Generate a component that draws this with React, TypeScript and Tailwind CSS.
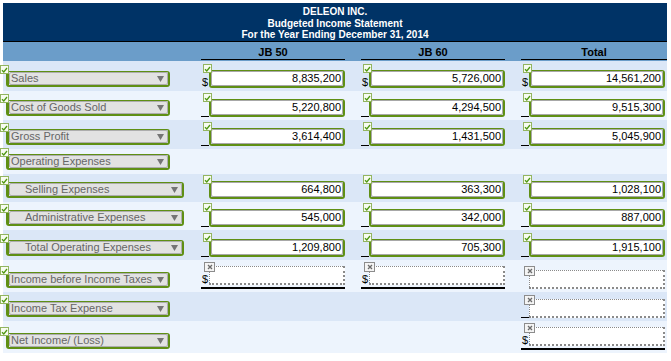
import React from 'react';

type Cell = {
  v?: string;
  empty?: boolean;
  dollar?: boolean;
  line?: 'single' | 'double';
} | null;

type Row = {
  label: string;
  indent?: boolean;
  h: string;
  dark: boolean;
  cells: [Cell, Cell, Cell];
};

const rows: Row[] = [
  {
    label: 'Sales',
    h: 'h-[30px]',
    dark: true,
    cells: [
      { v: '8,835,200', dollar: true },
      { v: '5,726,000', dollar: true },
      { v: '14,561,200', dollar: true },
    ],
  },
  {
    label: 'Cost of Goods Sold',
    h: 'h-[29px]',
    dark: false,
    cells: [
      { v: '5,220,800', line: 'single' },
      { v: '4,294,500', line: 'single' },
      { v: '9,515,300', line: 'single' },
    ],
  },
  {
    label: 'Gross Profit',
    h: 'h-[29px]',
    dark: true,
    cells: [
      { v: '3,614,400', line: 'single' },
      { v: '1,431,500', line: 'single' },
      { v: '5,045,900', line: 'single' },
    ],
  },
  { label: 'Operating Expenses', h: 'h-[25px]', dark: false, cells: [null, null, null] },
  {
    label: 'Selling Expenses',
    indent: true,
    h: 'h-[28px]',
    dark: true,
    cells: [{ v: '664,800' }, { v: '363,300' }, { v: '1,028,100' }],
  },
  {
    label: 'Administrative Expenses',
    indent: true,
    h: 'h-[28px]',
    dark: false,
    cells: [
      { v: '545,000', line: 'single' },
      { v: '342,000', line: 'single' },
      { v: '887,000', line: 'single' },
    ],
  },
  {
    label: 'Total Operating Expenses',
    indent: true,
    h: 'h-[30px]',
    dark: true,
    cells: [
      { v: '1,209,800', line: 'single' },
      { v: '705,300', line: 'single' },
      { v: '1,915,100', line: 'single' },
    ],
  },
  {
    label: 'Income before Income Taxes',
    h: 'h-[32px]',
    dark: false,
    cells: [
      { empty: true, dollar: true, line: 'double' },
      { empty: true, dollar: true, line: 'double' },
      { empty: true },
    ],
  },
  {
    label: 'Income Tax Expense',
    h: 'h-[29px]',
    dark: true,
    cells: [null, null, { empty: true, line: 'single' }],
  },
  {
    label: 'Net Income/ (Loss)',
    h: 'h-[32px]',
    dark: false,
    cells: [null, null, { empty: true, dollar: true, line: 'double' }],
  },
];

const Check = () => (
  <div className="absolute -left-[6px] -top-[6px] z-10 flex h-[9px] w-[9px] items-center justify-center border border-[#93b560] bg-[#f8fcf1]">
    <svg width="7" height="6" viewBox="0 0 7 6">
      <path d="M1 3.2 L2.8 5 L6 1" fill="none" stroke="#4e9812" strokeWidth="1.3" />
    </svg>
  </div>
);

const Cross = () => (
  <div className="absolute -left-[5px] -top-[4px] z-10 flex h-[10px] w-[11px] items-center justify-center border border-[#8c8c8c] bg-[#f4f4f4]">
    <svg width="6" height="6" viewBox="0 0 6 6">
      <path d="M1 1 L5 5 M5 1 L1 5" stroke="#6b6b6b" strokeWidth="1.3" />
    </svg>
  </div>
);

const Dropdown = ({ label, indent }: { label: string; indent?: boolean }) => (
  <div className={`relative h-[16px] ${indent ? 'w-[178px]' : 'w-[164px]'}`}>
    <Check />
    <div className="flex h-full rounded-[3px] border-t border-r-2 border-b-2 border-l-[3px] border-[#5f8f14]">
      <div
        className={`flex flex-1 items-center justify-between rounded-[2px] border border-[#adadad] bg-[#e2e2e2] pr-[3px] text-[11px] leading-none text-[#666] ${
          indent ? 'pl-[15px]' : 'pl-[1px]'
        }`}
      >
        <span>{label}</span>
        <svg width="7" height="6" viewBox="0 0 7 6">
          <path d="M0 0 H7 L3.5 6 Z" fill="#757575" />
        </svg>
      </div>
    </div>
  </div>
);

const ValueCell = ({ cell, total }: { cell: Cell; total?: boolean }) => {
  if (!cell) return <div className={total ? 'w-[146px]' : 'w-[144px]'} />;
  const dbl = cell.line === 'double';
  return (
    <div className={total ? 'w-[146px]' : 'w-[144px]'}>
      <div className={`flex w-[144px] items-end ${dbl ? 'border-b-2 border-black pb-[2px]' : ''}`}>
        <div
          className={`flex h-[14px] w-[8px] items-end text-[11px] leading-none text-black ${
            cell.line === 'single' ? 'border-b border-black' : ''
          }`}
        >
          {cell.dollar ? <span className="pl-[1px]">$</span> : null}
        </div>
        {cell.empty ? (
          <div className="relative h-[19px] w-[136px]">
            <Cross />
            <div className="h-full border-t border-l border-r-2 border-b-2 border-dotted border-[#8a8a8a] bg-white" />
          </div>
        ) : (
          <div className="relative h-[18px] w-[136px]">
            <Check />
            <div className="flex h-full rounded-[3px] border-t border-r-2 border-b-2 border-l-2 border-[#5f8f14]">
              <div className="flex flex-1 items-center justify-end rounded-[2px] border border-[#a8a8a8] bg-white pr-[1px] text-[11px] leading-none text-black">
                {cell.v}
              </div>
            </div>
          </div>
        )}
      </div>
    </div>
  );
};

export default function App() {
  return (
    <div className="h-[361px] w-[671px] bg-white pl-[3px] pt-[3px] font-['Liberation_Sans',Arial,sans-serif]">
      <div className="w-[664px]">
        <div className="h-[39px] border-b border-black bg-[#003366] pt-[3px] text-center text-[10px] font-bold leading-[11.5px] text-white">
          <div>DELEON INC.</div>
          <div>Budgeted Income Statement</div>
          <div>For the Year Ending December 31, 2014</div>
        </div>
        <div className="flex h-[19px] bg-[#6b9dc9] text-[11px] font-bold text-black">
          <div className="w-[198px]" />
          <div className="h-[18px] w-[144px] border-b border-black pt-[3px] text-center leading-[14px]">JB 50</div>
          <div className="w-[16px]" />
          <div className="h-[18px] w-[144px] border-b border-black pt-[3px] text-center leading-[14px]">JB 60</div>
          <div className="w-[16px]" />
          <div className="h-[18px] w-[146px] border-b border-black pt-[3px] text-center leading-[14px]">Total</div>
        </div>
        {rows.map((row) => (
          <div
            key={row.label}
            className={`flex items-end pb-[3px] ${row.h} ${row.dark ? 'bg-[#dbe7f7]' : 'bg-[#edf4fd]'}`}
          >
            <div className="mb-[1px] w-[198px] pl-[3px]">
              <Dropdown label={row.label} indent={row.indent} />
            </div>
            <ValueCell cell={row.cells[0]} />
            <div className="w-[16px]" />
            <ValueCell cell={row.cells[1]} />
            <div className="w-[16px]" />
            <ValueCell cell={row.cells[2]} total />
          </div>
        ))}
      </div>
    </div>
  );
}
